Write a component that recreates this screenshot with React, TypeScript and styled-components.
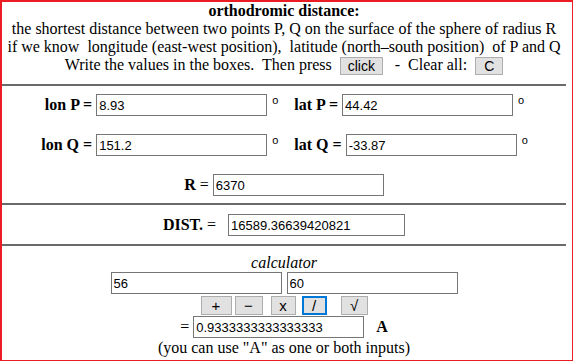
import React, { useState } from "react";
import styled, { createGlobalStyle } from "styled-components";

const GlobalStyle = createGlobalStyle`
  html, body {
    margin: 0;
    padding: 0;
    background: #ffffff;
  }
  body {
    font-family: "Liberation Serif", "Times New Roman", serif;
    font-size: 16px;
    color: #000000;
  }
`;

const Frame = styled.div`
  box-sizing: border-box;
  width: 573px;
  height: 361px;
  border-top: 2px solid #ec1c24;
  border-left: 2px solid #ec1c24;
  border-right: 1px solid #ec1c24;
  border-bottom: 1px solid #ec1c24;
  padding-right: 6px;
  display: flex;
  flex-direction: column;
  overflow: hidden;
`;

const Header = styled.div`
  text-align: center;
  line-height: 18px;
`;

const Title = styled.div`
  font-weight: bold;
`;

const Line = styled.div`
  white-space: pre;
  height: 18px;
`;

const Rule = styled.div<{ $top: number }>`
  height: 0;
  border-top: 2px solid #6a6a6a;
  margin-top: ${(p) => p.$top}px;
`;

const Button = styled.button<{ $w: number; $h?: number; $fs?: number; $focus?: boolean }>`
  box-sizing: border-box;
  width: ${(p) => p.$w}px;
  height: ${(p) => p.$h ?? 18}px;
  padding: 0;
  margin: 0;
  font-family: "Liberation Sans", Arial, sans-serif;
  font-size: ${(p) => p.$fs ?? 13}px;
  line-height: 1;
  color: #000000;
  background: #e1e1e1;
  border: ${(p) => (p.$focus ? "2px solid #0078d7" : "1px solid #adadad")};
  vertical-align: middle;
  cursor: pointer;
`;

const Field = styled.input<{ $w?: number }>`
  box-sizing: border-box;
  width: ${(p) => p.$w ?? 171}px;
  height: 22px;
  margin: 0;
  padding: 1px 2px;
  border: 1px solid #767676;
  font-family: "Liberation Sans", Arial, sans-serif;
  font-size: 13px;
  color: #000000;
  background: #ffffff;
  outline: none;
  vertical-align: middle;
`;

const CoordGrid = styled.div`
  display: grid;
  grid-template-columns: auto auto;
  justify-content: center;
  row-gap: 18px;
  padding: 8px 0 0 1px;
`;

const Cell = styled.div<{ $align: "left" | "right" }>`
  display: flex;
  align-items: center;
  justify-content: ${(p) => (p.$align === "right" ? "flex-end" : "flex-start")};
  white-space: pre;
  height: 22px;
`;

const Label = styled.span`
  font-weight: bold;
  margin-right: 4px;
`;

const PlainLabel = styled.span`
  margin-right: 4px;
`;

const Degree = styled.span<{ $gap?: number }>`
  font-family: "Liberation Sans", Arial, sans-serif;
  font-size: 11px;
  position: relative;
  top: -5px;
  margin-left: 5px;
  margin-right: ${(p) => p.$gap ?? 0}px;
`;

const CenterRow = styled.div<{ $pt: number; $pb: number }>`
  display: flex;
  justify-content: center;
  align-items: center;
  padding-top: ${(p) => p.$pt}px;
  padding-bottom: ${(p) => p.$pb}px;
  white-space: pre;
`;

const Calc = styled.div`
  display: flex;
  flex-direction: column;
  align-items: center;
  padding-top: 8px;
`;

const CalcTitle = styled.div`
  font-style: italic;
  line-height: 18px;
`;

const InputPair = styled.div`
  display: flex;
  gap: 5px;
`;

const OpRow = styled.div`
  display: flex;
  align-items: center;
  margin-top: 1px;
  height: 21px;
`;

const Op = styled(Button)<{ $ml: number }>`
  margin-left: ${(p) => p.$ml}px;
`;

const ResultRow = styled.div`
  display: flex;
  align-items: center;
  white-space: pre;
`;

const ALetter = styled.span`
  font-weight: bold;
  margin-left: 12px;
`;

const Note = styled.div`
  line-height: 18px;
  margin-top: 1px;
`;

const toRad = (d: number) => (d * Math.PI) / 180;

export default function App() {
  const [lonP, setLonP] = useState("8.93");
  const [latP, setLatP] = useState("44.42");
  const [lonQ, setLonQ] = useState("151.2");
  const [latQ, setLatQ] = useState("-33.87");
  const [r, setR] = useState("6370");
  const [dist, setDist] = useState("16589.36639420821");
  const [a, setA] = useState("56");
  const [b, setB] = useState("60");
  const [res, setRes] = useState("0.9333333333333333");

  const compute = () => {
    const f1 = toRad(parseFloat(latP));
    const f2 = toRad(parseFloat(latQ));
    const dl = toRad(parseFloat(lonQ) - parseFloat(lonP));
    const c = Math.acos(
      Math.sin(f1) * Math.sin(f2) + Math.cos(f1) * Math.cos(f2) * Math.cos(dl)
    );
    setDist(String(c * parseFloat(r)));
  };

  const clearAll = () => {
    setLonP("");
    setLatP("");
    setLonQ("");
    setLatQ("");
    setR("");
    setDist("");
  };

  const val = (s: string) => (s.trim() === "A" ? parseFloat(res) : parseFloat(s));
  const op = (k: string) => {
    const x = val(a);
    const y = val(b);
    let out = 0;
    if (k === "+") out = x + y;
    if (k === "-") out = x - y;
    if (k === "x") out = x * y;
    if (k === "/") out = x / y;
    if (k === "sqrt") out = Math.sqrt(x);
    setRes(String(out));
  };

  return (
    <>
      <GlobalStyle />
      <Frame>
        <Header>
          <Title>orthodromic distance:</Title>
          <Line>the shortest distance between two points P, Q on the surface of the sphere of radius R</Line>
          <Line>if we know  longitude (east-west position),  latitude (north–south position)  of P and Q</Line>
          <Line>
            {"Write the values in the boxes.  Then press  "}
            <Button $w={43} $fs={14} onClick={compute}>click</Button>
            {"   -  Clear all:  "}
            <Button $w={28} $fs={14} onClick={clearAll}>C</Button>
          </Line>
        </Header>

        <Rule $top={10} />

        <CoordGrid>
          <Cell $align="right">
            <Label>lon P =</Label>
            <Field value={lonP} onChange={(e) => setLonP(e.target.value)} />
          </Cell>
          <Cell $align="left">
            <Degree $gap={16}>o</Degree>
            <Label>lat P =</Label>
            <Field value={latP} onChange={(e) => setLatP(e.target.value)} />
            <Degree>o</Degree>
          </Cell>
          <Cell $align="right">
            <Label>lon Q =</Label>
            <Field value={lonQ} onChange={(e) => setLonQ(e.target.value)} />
          </Cell>
          <Cell $align="left">
            <Degree $gap={16}>o</Degree>
            <Label>lat Q =</Label>
            <Field value={latQ} onChange={(e) => setLatQ(e.target.value)} />
            <Degree>o</Degree>
          </Cell>
        </CoordGrid>

        <CenterRow $pt={18} $pb={7}>
          <Label>R</Label>
          <PlainLabel>=</PlainLabel>
          <Field value={r} onChange={(e) => setR(e.target.value)} />
        </CenterRow>

        <Rule $top={0} />

        <CenterRow $pt={9} $pb={8}>
          <Label>DIST.</Label>
          <PlainLabel>=  </PlainLabel>
          <Field $w={177} value={dist} onChange={(e) => setDist(e.target.value)} />
        </CenterRow>

        <Rule $top={0} />

        <Calc>
          <CalcTitle>calculator</CalcTitle>
          <InputPair>
            <Field value={a} onChange={(e) => setA(e.target.value)} />
            <Field value={b} onChange={(e) => setB(e.target.value)} />
          </InputPair>
          <OpRow>
            <Op $w={31} $h={19} $fs={15} $ml={0} onClick={() => op("+")}>+</Op>
            <Op $w={28} $h={19} $fs={15} $ml={3} onClick={() => op("-")}>−</Op>
            <Op $w={25} $h={19} $fs={15} $ml={8} onClick={() => op("x")}>x</Op>
            <Op $w={25} $h={19} $fs={15} $ml={6} $focus onClick={() => op("/")}>/</Op>
            <Op $w={27} $h={19} $fs={15} $ml={14} onClick={() => op("sqrt")}>√</Op>
          </OpRow>
          <ResultRow>
            <PlainLabel>=</PlainLabel>
            <Field value={res} onChange={(e) => setRes(e.target.value)} />
            <ALetter>A</ALetter>
          </ResultRow>
          <Note>(you can use "A" as one or both inputs)</Note>
        </Calc>
      </Frame>
    </>
  );
}
